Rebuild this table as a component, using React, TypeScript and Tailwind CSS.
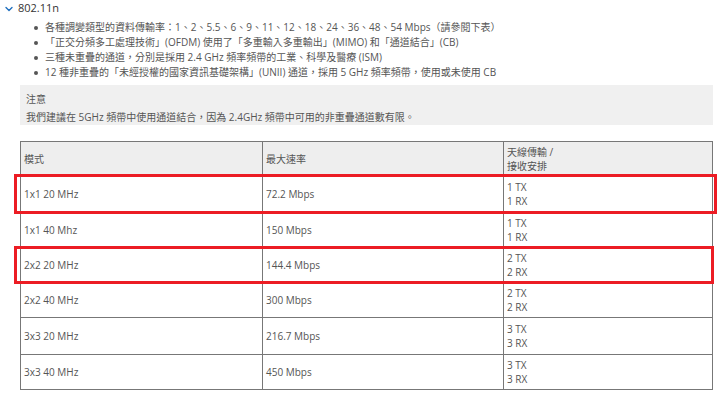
import React from "react";
import { ChevronDown } from "lucide-react";

const bullets = [
  "各種調變類型的資料傳輸率：1、2、5.5、6、9、11、12、18、24、36、48、54 Mbps（請參閱下表）",
  "「正交分頻多工處理技術」(OFDM) 使用了「多重輸入多重輸出」(MIMO) 和「通道結合」(CB)",
  "三種未重疊的通道，分別是採用 2.4 GHz 頻率頻帶的工業、科學及醫療 (ISM)",
  "12 種非重疊的「未經授權的國家資訊基礎架構」(UNII) 通道，採用 5 GHz 頻率頻帶，使用或未使用 CB",
];

const rows = [
  { mode: "1x1 20 MHz", rate: "72.2 Mbps", n: 1 },
  { mode: "1x1 40 Mhz", rate: "150 Mbps", n: 1 },
  { mode: "2x2 20 MHz", rate: "144.4 Mbps", n: 2 },
  { mode: "2x2 40 MHz", rate: "300 Mbps", n: 2 },
  { mode: "3x3 20 MHz", rate: "216.7 Mbps", n: 3 },
  { mode: "3x3 40 MHz", rate: "450 Mbps", n: 3 },
];

const App = () => {
  return (
    <div className="relative w-[720px] h-[396px] overflow-hidden bg-white text-[10px] text-[#555] font-['Open_Sans','Noto_Sans_CJK_TC',sans-serif]">
      <div className="flex items-center gap-[3px] pl-[3px] pt-[1px] h-[16px]">
        <ChevronDown size={12} strokeWidth={2.75} className="text-[#1f6fbf]" />
        <span className="text-[11px] text-[#333]">802.11n</span>
      </div>

      <ul className="mt-[4px] pl-[45px] leading-[15px]">
        {bullets.map((b) => (
          <li key={b} className="relative whitespace-nowrap">
            <span className="absolute left-[-11px] top-[6px] w-[4px] h-[4px] rounded-full bg-[#555]" />
            {b}
          </li>
        ))}
      </ul>

      <div className="mt-[5px] ml-[20px] w-[693px] h-[40px] bg-[#f0f0f0] px-[6px] pt-[5px] leading-[18px]">
        <div>注意</div>
        <div>我們建議在 5GHz 頻帶中使用通道結合，因為 2.4GHz 頻帶中可用的非重疊通道數有限。</div>
      </div>

      <table className="mt-[16px] ml-[20px] w-[693px] border-collapse border border-[#777] leading-[14px]">
        <colgroup>
          <col className="w-[242px]" />
          <col className="w-[241px]" />
          <col />
        </colgroup>
        <thead>
          <tr className="h-[34px] bg-[#eeeeee] text-left">
            <th className="font-normal border border-[#777] px-[3px]">模式</th>
            <th className="font-normal border border-[#777] px-[3px]">最大速率</th>
            <th className="font-normal border border-[#777] px-[3px]">
              天線傳輸 /<br />接收安排
            </th>
          </tr>
        </thead>
        <tbody>
          {rows.map((r, i) => (
            <tr key={r.mode} className={i === 0 || i === 4 ? "h-[37px]" : "h-[35px]"}>
              <td className="border border-[#777] px-[3px]">{r.mode}</td>
              <td className="border border-[#777] px-[3px]">{r.rate}</td>
              <td className="border border-[#777] px-[3px]">
                {r.n} TX<br />{r.n} RX
              </td>
            </tr>
          ))}
        </tbody>
      </table>

      <div className="absolute left-[14px] top-[174px] w-[703px] h-[40px] border-[3px] border-[#ec1c24]" />
      <div className="absolute left-[14px] top-[246px] w-[700px] h-[38px] border-[3px] border-[#ec1c24]" />
    </div>
  );
};

export default App;
